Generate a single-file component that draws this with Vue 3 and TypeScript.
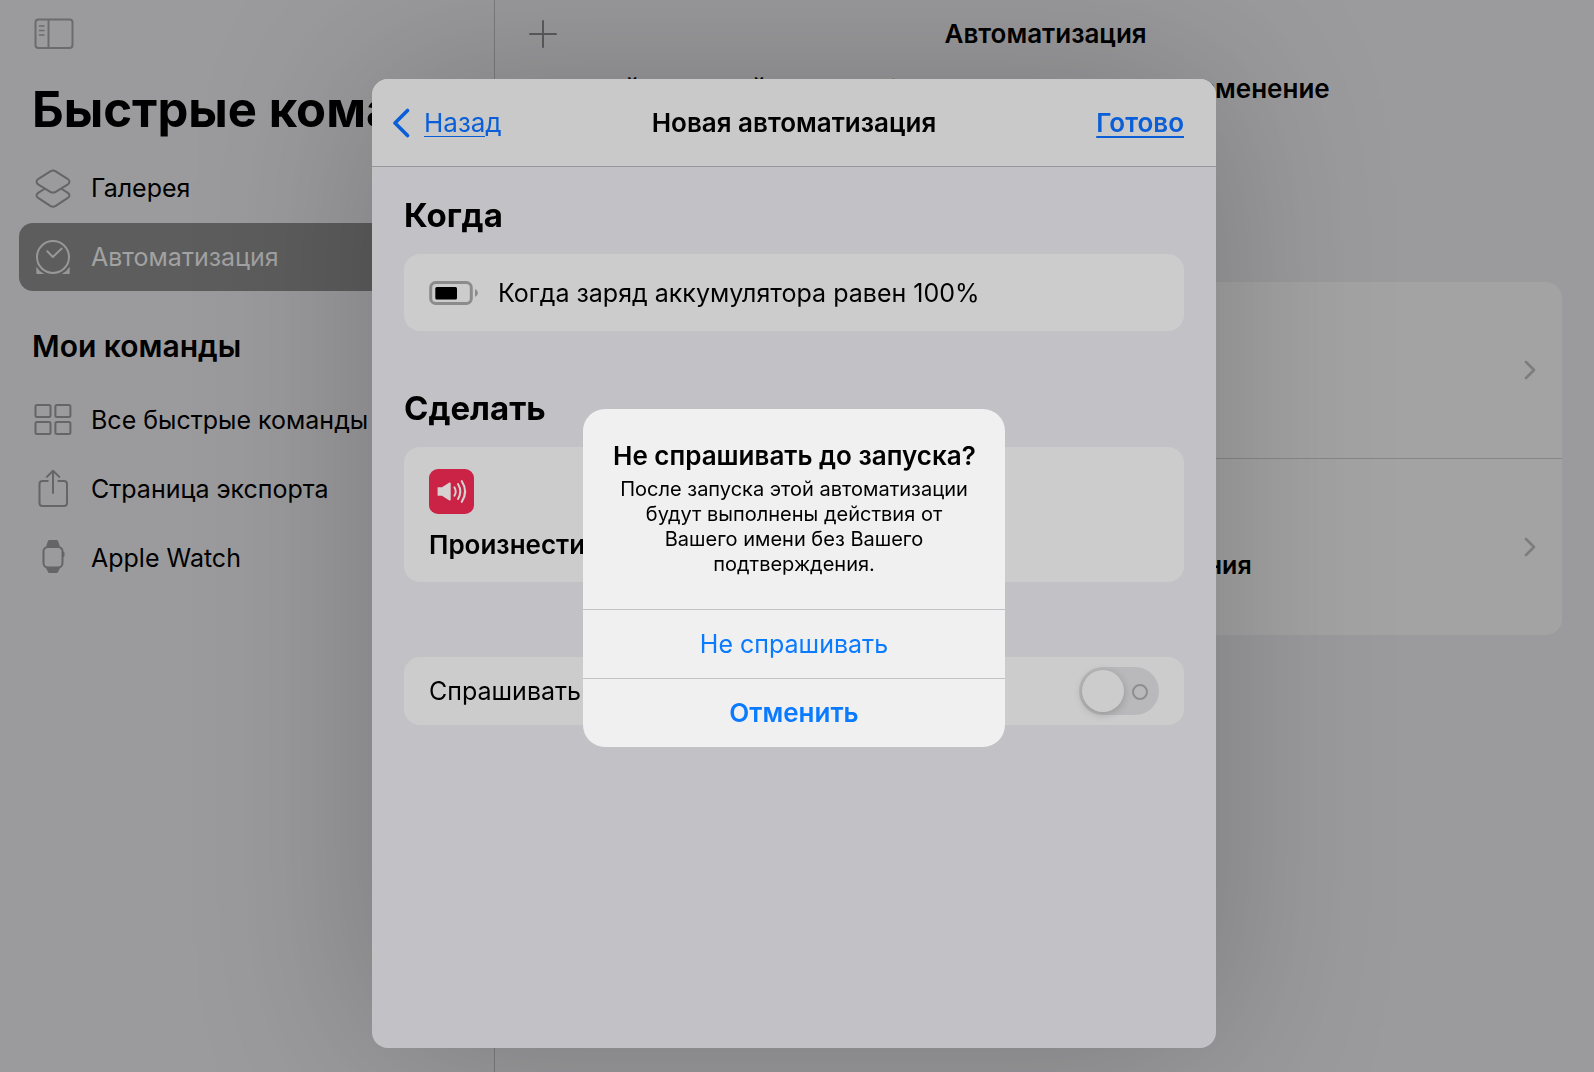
<script setup lang="ts">
import { ref } from 'vue'

interface NavItem {
  id: string
  label: string
}

const mainItems: NavItem[] = [
  { id: 'gallery', label: 'Галерея' },
  { id: 'automation', label: 'Автоматизация' },
]

const commandItems: NavItem[] = [
  { id: 'all', label: 'Все быстрые команды' },
  { id: 'share', label: 'Страница экспорта' },
  { id: 'watch', label: 'Apple Watch' },
]

const groups = [
  { title: '', items: mainItems },
  { title: 'Мои команды', items: commandItems },
]

const automationKinds = ['Для себя', 'Для освещения']

const selected = ref('automation')
const askBeforeRun = ref(false)
</script>

<template>
  <div class="app">
    <aside class="sidebar">
      <button class="icon-button" type="button" aria-label="Боковое меню">
        <svg width="40" height="32" viewBox="0 0 40 32" fill="none" stroke="currentColor" stroke-width="2">
          <rect x="1.5" y="1.5" width="37" height="28.5" rx="3" />
          <path d="M14.5 1.5V30" />
          <path d="M5.5 8H10M5.5 12.5H10M5.5 17H10" stroke-width="1.6" stroke-linecap="round" />
        </svg>
      </button>
      <h1>Быстрые команды</h1>
      <nav>
        <section v-for="group in groups" :key="group.title" class="group">
          <h2 v-if="group.title">{{ group.title }}</h2>
          <a
            v-for="item in group.items"
            :key="item.id"
            href="#"
            class="nav-item"
            :class="{ active: item.id === selected }"
            @click.prevent="selected = item.id"
          >
            <svg width="40" height="40" viewBox="0 0 40 40" fill="none" stroke="currentColor" stroke-width="2" stroke-linecap="round" stroke-linejoin="round">
              <template v-if="item.id === 'gallery'">
                <path d="M17.3 3.4Q20 1.8 22.7 3.4L34.5 10.8Q38.5 13.7 34.5 16.6L22.7 23.8Q20 25.4 17.3 23.8L5.5 16.6Q1.5 13.7 5.5 10.8Z" />
                <path d="M11.3 21L5.5 24.6Q1.5 27.5 5.5 30.2L17.3 37.9Q20 39.4 22.7 37.9L34.5 30.2Q38.5 27.5 34.5 24.6L28.7 21" />
              </template>
              <template v-else-if="item.id === 'automation'">
                <circle cx="20" cy="20" r="16" />
                <path d="M14.3 14.3L19.8 20L28.7 11.6" />
                <path d="M3.3 29.7V36Q3.3 37 4.3 37H11.3Q6.3 34.6 3.3 29.7ZM36.7 29.7V36Q36.7 37 35.7 37H28.7Q33.7 34.6 36.7 29.7Z" fill="currentColor" stroke="none" />
              </template>
              <template v-else-if="item.id === 'all'">
                <rect x="2.5" y="5" width="15" height="12" rx="1.5" />
                <rect x="22.4" y="5" width="15" height="12" rx="1.5" />
                <rect x="2.5" y="22" width="15" height="12" rx="1.5" />
                <rect x="22.4" y="22" width="15" height="12" rx="1.5" />
              </template>
              <template v-else-if="item.id === 'share'">
                <path d="M14.8 12H9.5Q6.5 12 6.5 15V34Q6.5 37 9.5 37H31Q34 37 34 34V15Q34 12 31 12H25.4" />
                <path d="M20 24V2M13.9 7.9L20 1.8L26.3 7.9" />
              </template>
              <template v-else>
                <rect x="10.5" y="9" width="19" height="20.5" rx="4.5" />
                <path d="M13 8.5L15 3Q15.3 2 16.3 2H23.7Q24.7 2 25 3L27 8.5ZM13 30L15 34Q15.3 35 16.3 35H23.7Q24.7 35 25 34L27 30ZM30 13.5Q31.5 13.5 31.5 15V17.5Q31.5 19 30 19Z" fill="currentColor" stroke="none" />
              </template>
            </svg>
            <span>{{ item.label }}</span>
          </a>
        </section>
      </nav>
    </aside>

    <main class="content">
      <header class="content-bar">
        <button class="add-button" type="button" aria-label="Добавить">
          <svg width="28" height="28" viewBox="0 0 28 28" stroke="currentColor" stroke-width="2" stroke-linecap="round">
            <path d="M14 1V27M1 14H27" />
          </svg>
        </button>
        <h2>Автоматизация</h2>
      </header>
      <p class="intro">для этой смежной модели будут отправляться на изменение</p>
      <div class="kinds">
        <a v-for="kind in automationKinds" :key="kind" href="#" class="kind" @click.prevent>
          <span>{{ kind }}</span>
          <svg width="12" height="20" viewBox="0 0 12 20" fill="none" stroke="currentColor" stroke-width="2.6" stroke-linecap="round" stroke-linejoin="round">
            <path d="M2 2L10 10L2 18" />
          </svg>
        </a>
      </div>
    </main>

    <div class="sheet-layer">
      <section class="sheet" aria-label="Новая автоматизация">
        <header class="sheet-bar">
          <button class="back" type="button">
            <svg width="18" height="30" viewBox="0 0 18 30" fill="none" stroke="currentColor" stroke-width="3.6" stroke-linecap="round" stroke-linejoin="round">
              <path d="M15.5 2.5L3 15L15.5 27.5" />
            </svg>
            <span>Назад</span>
          </button>
          <h2>Новая автоматизация</h2>
          <button class="done" type="button">Готово</button>
        </header>
        <div class="sheet-body">
          <h3>Когда</h3>
          <div class="card trigger">
            <svg width="50" height="24" viewBox="0 0 50 24">
              <rect x="1.7" y="1.5" width="40.6" height="21" rx="5" fill="none" stroke="#8b8b8b" stroke-width="3" />
              <rect x="6.3" y="6" width="21.7" height="12.6" rx="1.5" fill="#000" />
              <path d="M46 8Q49 9.5 49 12T46 16Z" fill="#8b8b8b" />
            </svg>
            <span>Когда заряд аккумулятора равен 100%</span>
          </div>
          <h3>Сделать</h3>
          <div class="card action">
            <svg width="45" height="45" viewBox="0 0 45 45" fill="none" stroke="#d6d2d2" stroke-linecap="round">
              <rect width="45" height="45" rx="9" fill="#ca2345" stroke="none" />
              <path d="M8.6 18.2H13L20.4 13.6Q21.7 13 21.7 14.4V30.6Q21.7 32 20.4 31.4L13 26.8H8.6Z" fill="#d6d2d2" stroke="none" />
              <path d="M25.4 18.2Q28 22.5 25.4 26.8" stroke-width="1.9" />
              <path d="M29 15Q33.6 22.5 29 30" stroke-width="2" />
              <path d="M32.8 12.2Q39.4 22.5 32.8 32.8" stroke-width="2.1" />
            </svg>
            <span>Произнести</span>
          </div>
          <div class="card ask">
            <label for="ask">Спрашивать</label>
            <input id="ask" v-model="askBeforeRun" class="switch" type="checkbox" role="switch" />
          </div>
        </div>
      </section>
    </div>

    <div class="alert-layer">
      <div class="alert" role="alertdialog" aria-labelledby="alert-title" aria-describedby="alert-text">
        <div class="alert-text">
          <h2 id="alert-title">Не спрашивать до запуска?</h2>
          <p id="alert-text">После запуска этой автоматизации будут выполнены действия от Вашего имени без Вашего подтверждения.</p>
        </div>
        <button type="button">Не спрашивать</button>
        <button type="button" class="cancel">Отменить</button>
      </div>
    </div>
  </div>
</template>

<style>
body {
  margin: 0;
  background: #9b9b9d;
}
</style>

<style scoped>
.app {
  display: grid;
  grid-template-columns: 31% 1fr;
  min-height: 100vh;
  overflow: hidden;
  background: #9b9b9d;
  color: #000;
  font-family: Inter, "Noto Sans", sans-serif;
  font-size: 25px;
  line-height: 32px;
}

h1,
h2,
h3,
p {
  margin: 0;
}

button {
  padding: 0;
  border: 0;
  background: none;
  color: inherit;
  font: inherit;
  cursor: pointer;
}

a {
  color: inherit;
  text-decoration: none;
}

svg {
  display: block;
  flex: none;
}

.sidebar {
  min-width: 0;
}

.icon-button {
  display: block;
  margin: 18px 0 0 34px;
  color: #6c6c6e;
}

h1 {
  margin: 30px 0 14px 32px;
  font-size: 49px;
  font-weight: 700;
  line-height: 60px;
  white-space: nowrap;
}

.group {
  display: flex;
  flex-direction: column;
  gap: 1px;
  padding: 0 19px;
}

.group h2 {
  margin: 37px 0 21px 13px;
  font-size: 30px;
  font-weight: 600;
  line-height: 36px;
}

.nav-item {
  display: flex;
  align-items: center;
  gap: 18px;
  height: 68px;
  padding: 0 14px;
  border-radius: 14px;
  white-space: nowrap;
}

.nav-item svg {
  color: #656567;
}

.nav-item.active {
  background: #5d5d5d;
  color: #a2a2a2;
}

.nav-item.active svg {
  color: #979797;
}

.content {
  min-width: 0;
  border-left: 1px solid #7c7c7e;
}

.content-bar {
  display: grid;
  grid-template-columns: 1fr auto 1fr;
  align-items: center;
  height: 68px;
  padding: 0 32px 0 34px;
}

.content-bar h2 {
  font-size: 26px;
  font-weight: 600;
}

.add-button {
  justify-self: start;
  color: #5c5c5e;
}

.intro {
  padding: 5px 32px 0;
  font-size: 26px;
  font-weight: 600;
  white-space: nowrap;
}

.kinds {
  margin: 177px 32px 0;
  border-radius: 16px;
  background: #a3a3a3;
}

.kind {
  display: flex;
  align-items: center;
  justify-content: space-between;
  height: 176px;
  padding: 0 26px 0 51%;
}

.kind + .kind {
  border-top: 1px solid #868888;
}

.kind span {
  padding-top: 36px;
  font-weight: 600;
}

.kind svg {
  color: #7d7d7d;
}

.sheet-layer {
  position: fixed;
  inset: 0;
  display: flex;
  justify-content: center;
  padding: 79px 6px 24px 0;
}

.sheet {
  display: flex;
  flex-direction: column;
  width: 844px;
  max-width: 100%;
  overflow: hidden;
  border-radius: 16px;
  background: #c2c1c6;
  box-shadow: 0 0 180px rgba(0, 8, 0, 0.22);
}

.sheet-bar {
  display: grid;
  grid-template-columns: 1fr auto 1fr;
  align-items: center;
  height: 87px;
  padding: 0 32px;
  border-bottom: 1px solid #98989a;
  background: #c9c9c9;
  font-size: 26px;
}

.sheet-bar h2 {
  font-size: 26px;
  font-weight: 600;
}

.sheet-bar button {
  color: #0a5ed7;
  text-underline-offset: 4px;
}

.back {
  display: flex;
  align-items: center;
  gap: 14px;
  justify-self: start;
  margin-left: -12px;
}

.back span {
  text-decoration: underline 1px;
}

.done {
  justify-self: end;
  font-weight: 600;
  text-decoration: underline 2px;
}

.sheet-body {
  padding: 28px 32px;
}

h3 {
  margin-bottom: 19px;
  font-size: 33px;
  font-weight: 700;
  line-height: 40px;
}

.card {
  box-sizing: border-box;
  border-radius: 16px;
  background: #cccccc;
}

.trigger {
  display: flex;
  align-items: center;
  gap: 19px;
  height: 77px;
  margin-bottom: 57px;
  padding: 0 25px;
}

.action {
  display: flex;
  flex-direction: column;
  gap: 15px;
  margin-bottom: 75px;
  padding: 22px 25px 21px;
  font-size: 26px;
  font-weight: 600;
}

.ask {
  display: flex;
  align-items: center;
  justify-content: space-between;
  height: 68px;
  padding: 0 25px;
}

.switch {
  position: relative;
  width: 80px;
  height: 48px;
  margin: 0;
  border-radius: 24px;
  background: #b9b9bb;
  appearance: none;
}

.switch::before,
.switch::after {
  position: absolute;
  border-radius: 50%;
  content: "";
}

.switch::before {
  top: 3px;
  left: 3px;
  width: 42px;
  height: 42px;
  background: #cccccc;
  box-shadow: 0 2px 8px rgba(0, 0, 0, 0.2);
}

.switch::after {
  top: 17px;
  right: 11px;
  width: 12px;
  height: 12px;
  border: 2px solid #8e8e8e;
}

.alert-layer {
  position: fixed;
  inset: 0;
  display: flex;
  align-items: center;
  justify-content: center;
  padding: 84px 6px 0 0;
}

.alert {
  display: flex;
  flex-direction: column;
  width: 422px;
  max-width: 100%;
  overflow: hidden;
  border-radius: 22px;
  background: #f0f0f1;
  text-align: center;
}

.alert-text {
  padding: 31px 30px 32px;
}

.alert-text h2 {
  margin-bottom: 5px;
  font-size: 26px;
  font-weight: 600;
  white-space: nowrap;
}

.alert-text p {
  font-size: 20px;
  line-height: 25px;
}

.alert button {
  height: 68px;
  border-top: 1px solid #c3c3c6;
  color: #0a7aff;
  box-sizing: content-box;
}

.alert .cancel {
  font-size: 26px;
  font-weight: 600;
}
</style>
